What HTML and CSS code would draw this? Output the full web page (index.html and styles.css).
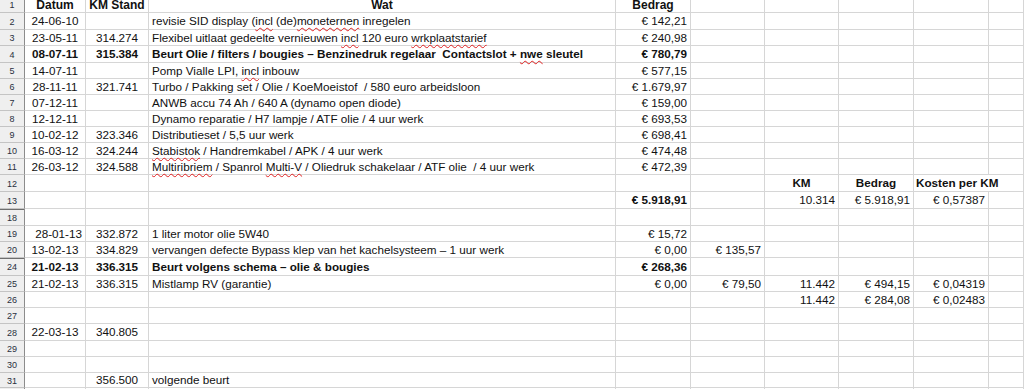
FILE: index.html
```html
<!DOCTYPE html>
<html>
<head>
<meta charset="utf-8">
<link rel="stylesheet" href="styles.css">
</head>
<body>
<div class="sheet">
  <div class="row h13 first">
    <div class="rh">1</div>
    <div class="cell c b">Datum</div>
    <div class="cell c b">KM Stand</div>
    <div class="cell c b">Wat</div>
    <div class="cell c b">Bedrag</div>
    <div class="cell"></div><div class="cell"></div><div class="cell"></div><div class="cell"></div><div class="cell"></div>
  </div>
  <div class="row h17">
    <div class="rh">2</div>
    <div class="cell c">24-06-10</div>
    <div class="cell c"></div>
    <div class="cell l"><span>revisie SID display (<span class="sp">incl</span> (de)<span class="sp">moneternen</span> inregelen</span></div>
    <div class="cell r">€ 142,21</div>
    <div class="cell"></div><div class="cell"></div><div class="cell"></div><div class="cell"></div><div class="cell"></div>
  </div>
  <div class="row h16">
    <div class="rh">3</div>
    <div class="cell c">23-05-11</div>
    <div class="cell c">314.274</div>
    <div class="cell l"><span>Flexibel uitlaat gedeelte vernieuwen <span class="sp">incl</span> 120 euro <span class="sp">wrkplaatstarief</span></span></div>
    <div class="cell r">€ 240,98</div>
    <div class="cell"></div><div class="cell"></div><div class="cell"></div><div class="cell"></div><div class="cell"></div>
  </div>
  <div class="row h17 bold">
    <div class="rh">4</div>
    <div class="cell c">08-07-11</div>
    <div class="cell c">315.384</div>
    <div class="cell l"><span>Beurt Olie / filters / bougies – Benzinedruk regelaar&nbsp; Contactslot + <span class="sp">nwe</span> sleutel</span></div>
    <div class="cell r">€ 780,79</div>
    <div class="cell"></div><div class="cell"></div><div class="cell"></div><div class="cell"></div><div class="cell"></div>
  </div>
  <div class="row h16">
    <div class="rh">5</div>
    <div class="cell c">14-07-11</div>
    <div class="cell c"></div>
    <div class="cell l"><span>Pomp Vialle LPI, <span class="sp">incl</span> inbouw</span></div>
    <div class="cell r">€ 577,15</div>
    <div class="cell"></div><div class="cell"></div><div class="cell"></div><div class="cell"></div><div class="cell"></div>
  </div>
  <div class="row h16">
    <div class="rh">6</div>
    <div class="cell c">28-11-11</div>
    <div class="cell c">321.741</div>
    <div class="cell l"><span>Turbo / Pakking set / Olie / KoeMoeistof&nbsp; / 580 euro arbeidsloon</span></div>
    <div class="cell r">€ 1.679,97</div>
    <div class="cell"></div><div class="cell"></div><div class="cell"></div><div class="cell"></div><div class="cell"></div>
  </div>
  <div class="row h16">
    <div class="rh">7</div>
    <div class="cell c">07-12-11</div>
    <div class="cell c"></div>
    <div class="cell l"><span>ANWB accu 74 Ah / 640 A (dynamo open diode)</span></div>
    <div class="cell r">€ 159,00</div>
    <div class="cell"></div><div class="cell"></div><div class="cell"></div><div class="cell"></div><div class="cell"></div>
  </div>
  <div class="row h16">
    <div class="rh">8</div>
    <div class="cell c">12-12-11</div>
    <div class="cell c"></div>
    <div class="cell l"><span>Dynamo reparatie / H7 lampje / ATF olie / 4 uur werk</span></div>
    <div class="cell r">€ 693,53</div>
    <div class="cell"></div><div class="cell"></div><div class="cell"></div><div class="cell"></div><div class="cell"></div>
  </div>
  <div class="row h16">
    <div class="rh">9</div>
    <div class="cell c">10-02-12</div>
    <div class="cell c">323.346</div>
    <div class="cell l"><span>Distributieset / 5,5 uur werk</span></div>
    <div class="cell r">€ 698,41</div>
    <div class="cell"></div><div class="cell"></div><div class="cell"></div><div class="cell"></div><div class="cell"></div>
  </div>
  <div class="row h16">
    <div class="rh">10</div>
    <div class="cell c">16-03-12</div>
    <div class="cell c">324.244</div>
    <div class="cell l"><span><span class="sp">Stabistok</span> / Handremkabel / APK / 4 uur werk</span></div>
    <div class="cell r">€ 474,48</div>
    <div class="cell"></div><div class="cell"></div><div class="cell"></div><div class="cell"></div><div class="cell"></div>
  </div>
  <div class="row h16">
    <div class="rh">11</div>
    <div class="cell c">26-03-12</div>
    <div class="cell c">324.588</div>
    <div class="cell l"><span><span class="sp">Multiribriem</span> / Spanrol <span class="sp">Multi-V</span> / Oliedruk schakelaar / ATF olie&nbsp; / 4 uur werk</span></div>
    <div class="cell r">€ 472,39</div>
    <div class="cell"></div><div class="cell"></div><div class="cell"></div><div class="cell"></div><div class="cell"></div>
  </div>
  <div class="row h17">
    <div class="rh">12</div>
    <div class="cell"></div><div class="cell"></div><div class="cell"></div><div class="cell"></div><div class="cell"></div>
    <div class="cell c b">KM</div>
    <div class="cell c b">Bedrag</div>
    <div class="cell l b span2">Kosten per KM</div>
  </div>
  <div class="row h17">
    <div class="rh">13</div>
    <div class="cell"></div><div class="cell"></div><div class="cell"></div>
    <div class="cell r b">€ 5.918,91</div>
    <div class="cell"></div>
    <div class="cell r">10.314</div>
    <div class="cell r">€ 5.918,91</div>
    <div class="cell r">€ 0,57387</div>
    <div class="cell"></div>
  </div>
  <div class="row h17 gap">
    <div class="rh">18</div>
    <div class="cell"></div><div class="cell"></div><div class="cell"></div><div class="cell"></div><div class="cell"></div><div class="cell"></div><div class="cell"></div><div class="cell"></div><div class="cell"></div>
  </div>
  <div class="row h16">
    <div class="rh">19</div>
    <div class="cell r">28-01-13</div>
    <div class="cell c">332.872</div>
    <div class="cell l"><span>1 liter motor olie 5W40</span></div>
    <div class="cell r">€ 15,72</div>
    <div class="cell"></div><div class="cell"></div><div class="cell"></div><div class="cell"></div><div class="cell"></div>
  </div>
  <div class="row h16">
    <div class="rh">20</div>
    <div class="cell c">13-02-13</div>
    <div class="cell c">334.829</div>
    <div class="cell l"><span>vervangen defecte Bypass klep van het kachelsysteem – 1 uur werk</span></div>
    <div class="cell r">€ 0,00</div>
    <div class="cell r">€ 135,57</div>
    <div class="cell"></div><div class="cell"></div><div class="cell"></div><div class="cell"></div>
  </div>
  <div class="row h18 bold gap">
    <div class="rh">24</div>
    <div class="cell c">21-02-13</div>
    <div class="cell c">336.315</div>
    <div class="cell l"><span>Beurt volgens schema – olie &amp; bougies</span></div>
    <div class="cell r">€ 268,36</div>
    <div class="cell"></div><div class="cell"></div><div class="cell"></div><div class="cell"></div><div class="cell"></div>
  </div>
  <div class="row h16">
    <div class="rh">25</div>
    <div class="cell c">21-02-13</div>
    <div class="cell c">336.315</div>
    <div class="cell l"><span>Mistlamp RV (garantie)</span></div>
    <div class="cell r">€ 0,00</div>
    <div class="cell r">€ 79,50</div>
    <div class="cell r">11.442</div>
    <div class="cell r">€ 494,15</div>
    <div class="cell r">€ 0,04319</div>
    <div class="cell"></div>
  </div>
  <div class="row h16">
    <div class="rh">26</div>
    <div class="cell"></div><div class="cell"></div><div class="cell"></div><div class="cell"></div><div class="cell"></div>
    <div class="cell r">11.442</div>
    <div class="cell r">€ 284,08</div>
    <div class="cell r">€ 0,02483</div>
    <div class="cell"></div>
  </div>
  <div class="row h16">
    <div class="rh">27</div>
    <div class="cell"></div><div class="cell"></div><div class="cell"></div><div class="cell"></div><div class="cell"></div><div class="cell"></div><div class="cell"></div><div class="cell"></div><div class="cell"></div>
  </div>
  <div class="row h17">
    <div class="rh">28</div>
    <div class="cell c">22-03-13</div>
    <div class="cell c">340.805</div>
    <div class="cell"></div><div class="cell"></div><div class="cell"></div><div class="cell"></div><div class="cell"></div><div class="cell"></div><div class="cell"></div>
  </div>
  <div class="row h16">
    <div class="rh">29</div>
    <div class="cell"></div><div class="cell"></div><div class="cell"></div><div class="cell"></div><div class="cell"></div><div class="cell"></div><div class="cell"></div><div class="cell"></div><div class="cell"></div>
  </div>
  <div class="row h16">
    <div class="rh">30</div>
    <div class="cell"></div><div class="cell"></div><div class="cell"></div><div class="cell"></div><div class="cell"></div><div class="cell"></div><div class="cell"></div><div class="cell"></div><div class="cell"></div>
  </div>
  <div class="row h15">
    <div class="rh">31</div>
    <div class="cell"></div>
    <div class="cell c">356.500</div>
    <div class="cell l"><span>volgende beurt</span></div>
    <div class="cell"></div><div class="cell"></div><div class="cell"></div><div class="cell"></div><div class="cell"></div><div class="cell"></div>
  </div>
  <div class="row h16">
    <div class="rh"></div>
    <div class="cell"></div><div class="cell"></div><div class="cell"></div><div class="cell"></div><div class="cell"></div><div class="cell"></div><div class="cell"></div><div class="cell"></div><div class="cell"></div>
  </div>
</div>
</body>
</html>
```
FILE: styles.css
```css
html, body {
  margin: 0;
  padding: 0;
  background: #ffffff;
  overflow: hidden;
}
body {
  width: 1024px;
  height: 389px;
  font-family: "Liberation Sans", Arial, sans-serif;
  font-size: 11.7px;
  color: #111111;
}
.sheet {
  display: flex;
  flex-direction: column;
}
.row {
  display: grid;
  grid-template-columns: 25px 61px 63px 467px 75px 74px 74px 75px 75px 35px;
}
.h13 { height: 13px; }
.h15 { height: 15px; }
.h16 { height: 16px; }
.h17 { height: 17px; }
.h18 { height: 18px; }
.bold .cell { font-weight: bold; }
.rh {
  box-sizing: border-box;
  background: #efefef;
  border-right: 1px solid #8c8c8c;
  border-bottom: 1px solid #c4c4c4;
  font-size: 9px;
  color: #2a3040;
  display: flex;
  align-items: center;
  justify-content: center;
  padding-top: 1px;
}
.first .rh {
  align-items: flex-start;
  line-height: 11px;
  padding-top: 0;
}
.gap .rh {
  box-shadow: inset 0 1px 0 #6e6e6e;
}
.cell {
  box-sizing: border-box;
  border-right: 1px solid #d6d6d6;
  border-bottom: 1px solid #d6d6d6;
  display: flex;
  align-items: center;
  white-space: nowrap;
  overflow: visible;
  padding: 0 3px;
  line-height: 14px;
}
.first .cell {
  align-items: flex-start;
  line-height: 11px;
  font-size: 12px;
}
.c { justify-content: center; }
.l { justify-content: flex-start; padding-left: 3px; }
.r { justify-content: flex-end; padding-right: 3px; }
.b { font-weight: bold; }
.span2 { grid-column: span 2; padding-left: 2px; }
.sp {
  text-decoration: underline wavy #e02020;
  text-decoration-thickness: 1px;
  text-decoration-skip-ink: none;
  text-underline-offset: 2px;
}
```
